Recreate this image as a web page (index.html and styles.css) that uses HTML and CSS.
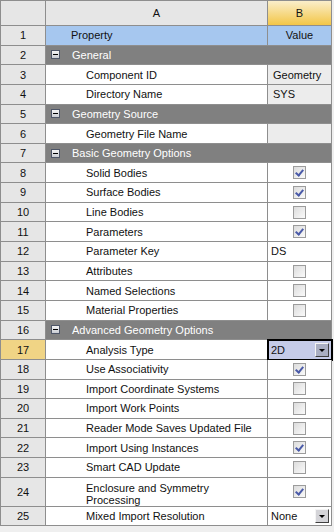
FILE: index.html
```html
<!DOCTYPE html>
<html lang="en">
<head>
    <meta charset="UTF-8">
    <title>Geometry Properties</title>
    <link rel="stylesheet" href="styles.css">
</head>
<body>

<div class="sheet">
    <!-- column headers -->
    <div class="cell corner"></div>
    <div class="cell colhead">A</div>
    <div class="cell colhead active">B</div>

    <div class="cell num">1</div>
    <div class="cell prop title">Property</div>
    <div class="cell val title center">Value</div>

    <div class="cell num">2</div>
    <div class="cell section"><span class="toggle"></span>General</div>

    <div class="cell num">3</div>
    <div class="cell prop">Component ID</div>
    <div class="cell val ro">Geometry</div>

    <div class="cell num">4</div>
    <div class="cell prop">Directory Name</div>
    <div class="cell val ro">SYS</div>

    <div class="cell num">5</div>
    <div class="cell section"><span class="toggle"></span>Geometry Source</div>

    <div class="cell num">6</div>
    <div class="cell prop">Geometry File Name</div>
    <div class="cell val ro"></div>

    <div class="cell num">7</div>
    <div class="cell section"><span class="toggle"></span>Basic Geometry Options</div>

    <div class="cell num">8</div>
    <div class="cell prop">Solid Bodies</div>
    <div class="cell val center"><span class="check on"></span></div>

    <div class="cell num">9</div>
    <div class="cell prop">Surface Bodies</div>
    <div class="cell val center"><span class="check on"></span></div>

    <div class="cell num">10</div>
    <div class="cell prop">Line Bodies</div>
    <div class="cell val center"><span class="check"></span></div>

    <div class="cell num">11</div>
    <div class="cell prop">Parameters</div>
    <div class="cell val center"><span class="check on"></span></div>

    <div class="cell num">12</div>
    <div class="cell prop">Parameter Key</div>
    <div class="cell val text">DS</div>

    <div class="cell num">13</div>
    <div class="cell prop">Attributes</div>
    <div class="cell val center"><span class="check"></span></div>

    <div class="cell num">14</div>
    <div class="cell prop">Named Selections</div>
    <div class="cell val center"><span class="check"></span></div>

    <div class="cell num">15</div>
    <div class="cell prop">Material Properties</div>
    <div class="cell val center"><span class="check"></span></div>

    <div class="cell num">16</div>
    <div class="cell section"><span class="toggle"></span>Advanced Geometry Options</div>

    <div class="cell num current">17</div>
    <div class="cell prop">Analysis Type</div>
    <div class="cell val text select selected">2D<span class="drop"></span></div>

    <div class="cell num">18</div>
    <div class="cell prop">Use Associativity</div>
    <div class="cell val center"><span class="check on"></span></div>

    <div class="cell num">19</div>
    <div class="cell prop">Import Coordinate Systems</div>
    <div class="cell val center"><span class="check"></span></div>

    <div class="cell num">20</div>
    <div class="cell prop">Import Work Points</div>
    <div class="cell val center"><span class="check"></span></div>

    <div class="cell num">21</div>
    <div class="cell prop">Reader Mode Saves Updated File</div>
    <div class="cell val center"><span class="check"></span></div>

    <div class="cell num">22</div>
    <div class="cell prop">Import Using Instances</div>
    <div class="cell val center"><span class="check on"></span></div>

    <div class="cell num">23</div>
    <div class="cell prop">Smart CAD Update</div>
    <div class="cell val center"><span class="check"></span></div>

    <div class="cell num">24</div>
    <div class="cell prop wrap">Enclosure and Symmetry<br>Processing</div>
    <div class="cell val center"><span class="check on"></span></div>

    <div class="cell num">25</div>
    <div class="cell prop">Mixed Import Resolution</div>
    <div class="cell val text select">None<span class="drop"></span></div>
</div>

</body>
</html>
```

FILE: styles.css
```css
body {
    margin: 0;
    background: #efefef;
    font-family: "Liberation Sans", Arial, sans-serif;
    font-size: 11px;
    color: #111;
}
.sheet {
    display: grid;
    width: 332px;
    grid-template-columns: 45px 222px 64px;
    grid-template-rows: 25px repeat(23, 19.65px) 29px 19px;
    border-top: 1px solid #8e8e8e;
    border-left: 1px solid #8e8e8e;
    box-sizing: border-box;
    background: #fff;
}
.cell {
    display: flex;
    align-items: center;
    box-sizing: border-box;
    border-right: 1px solid #8e8e8e;
    border-bottom: 1px solid #8e8e8e;
    white-space: nowrap;
    overflow: hidden;
    background: #fff;
}
.corner, .colhead, .num {
    background: #e6e6e6;
}
.colhead, .num, .center {
    justify-content: center;
}
.colhead.active {
    background: linear-gradient(#faeecb, #f3c647);
}
.num.current {
    background: #f0d485;
}
.title {
    background: #a6c7ef;
}
.prop {
    padding-left: 40px;
}
.prop.title {
    padding-left: 25px;
}
.prop.wrap {
    white-space: normal;
    line-height: 12px;
    padding-top: 4px;
}
.section {
    grid-column: span 2;
    background: #808080;
    color: #fff;
    padding-left: 5px;
}
.toggle {
    position: relative;
    width: 9px;
    height: 9px;
    margin-right: 12px;
    box-sizing: border-box;
    border: 1px solid #4e5668;
    background: linear-gradient(#f4f4f4, #c9ccd3);
}
.toggle::after {
    content: "";
    position: absolute;
    left: 1px;
    right: 1px;
    top: 3px;
    height: 1px;
    background: #000;
}
.val.ro {
    background: #ececec;
    padding-left: 5px;
}
.val.text {
    padding-left: 3px;
}
.check {
    position: relative;
    width: 13px;
    height: 13px;
    box-sizing: border-box;
    border: 1px solid #9c9c9c;
    background: linear-gradient(135deg, #dcdcdc, #fafafa);
}
.check.on::after {
    content: "";
    position: absolute;
    left: 3px;
    top: 1px;
    width: 3px;
    height: 6px;
    border-right: 2px solid #4a5aa8;
    border-bottom: 2px solid #4a5aa8;
    transform: rotate(40deg);
}
.select {
    justify-content: space-between;
    padding-right: 2px;
}
.select.selected {
    background: #c5cbe8;
    outline: 2px solid #000;
    outline-offset: -1px;
}
.drop {
    position: relative;
    width: 14px;
    height: 14px;
    box-sizing: border-box;
    background: #d4d4d8;
    border: 1px solid;
    border-color: #f4f4f4 #404040 #404040 #f4f4f4;
}
.selected .drop {
    background: #a9aec2;
}
.drop::after {
    content: "";
    position: absolute;
    left: 3px;
    top: 5px;
    border-left: 3px solid transparent;
    border-right: 3px solid transparent;
    border-top: 3px solid #000;
}
```
